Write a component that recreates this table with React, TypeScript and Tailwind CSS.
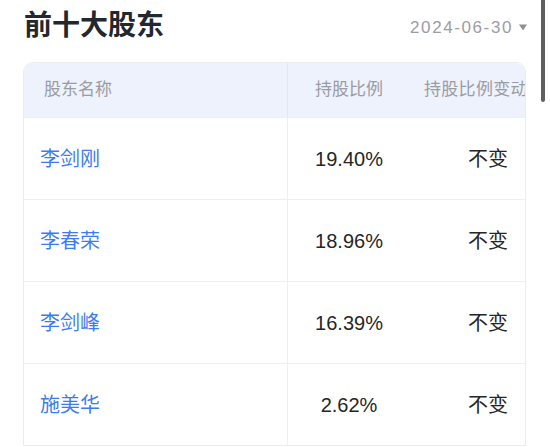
import React from "react"

interface Holder {
  name: string
  ratio: string
  change: string
}

const holders: Holder[] = [
  { name: "李剑刚", ratio: "19.40%", change: "不变" },
  { name: "李春荣", ratio: "18.96%", change: "不变" },
  { name: "李剑峰", ratio: "16.39%", change: "不变" },
  { name: "施美华", ratio: "2.62%", change: "不变" },
]

const App: React.FC = () => {
  return (
    <div className="relative w-[550px] h-[447px] overflow-hidden bg-white font-['Liberation_Sans','Noto_Sans_CJK_SC',sans-serif]">
      {/* page scroll indicator */}
      <div className="absolute right-[5px] top-0 w-[4px] h-[102px] rounded-b-full bg-[#5f5f5f]" />

      <div className="flex items-center justify-between pl-6 pr-[23px] h-[50px]">
        <h1 className="text-[28px] leading-none font-semibold text-[#23272e] pt-[1px]">前十大股东</h1>
        <div className="flex items-center gap-[6px] text-[17px] leading-none text-[#9c9da3] pt-[4px]">
          <span className="tracking-[1.6px]">2024-06-30</span>
          <svg width="8" height="7" viewBox="0 0 8 7">
            <path d="M0 0.5h8L4 6.5z" fill="#8f9096" />
          </svg>
        </div>
      </div>

      <div className="ml-[23px] mt-[12px] w-[503px] rounded-t-[10px] border border-[#ececec] overflow-hidden">
        <div className="flex h-[54px] bg-[#eef2fd] text-[17px] text-[#9a9ca3]">
          <div className="w-[264px] shrink-0 flex items-center pl-5 border-r border-[#e3e7f2]">股东名称</div>
          <div className="w-[122px] shrink-0 flex items-center justify-center">持股比例</div>
          <div className="flex-1 flex items-center pl-[14px] whitespace-nowrap overflow-hidden tracking-[0.3px]">持股比例变动</div>
        </div>
        {holders.map((h) => (
          <div key={h.name} className="flex h-[82px] border-t border-[#efefef] text-[20px]">
            <div className="w-[264px] shrink-0 flex items-center pl-4 border-r border-[#efefef] text-[#3d7cf0]">{h.name}</div>
            <div className="w-[122px] shrink-0 flex items-center justify-center text-[#262626]">{h.ratio}</div>
            <div className="flex-1 flex items-center justify-end pr-[17px] text-[#262626]">{h.change}</div>
          </div>
        ))}
      </div>
    </div>
  )
}

export default App
